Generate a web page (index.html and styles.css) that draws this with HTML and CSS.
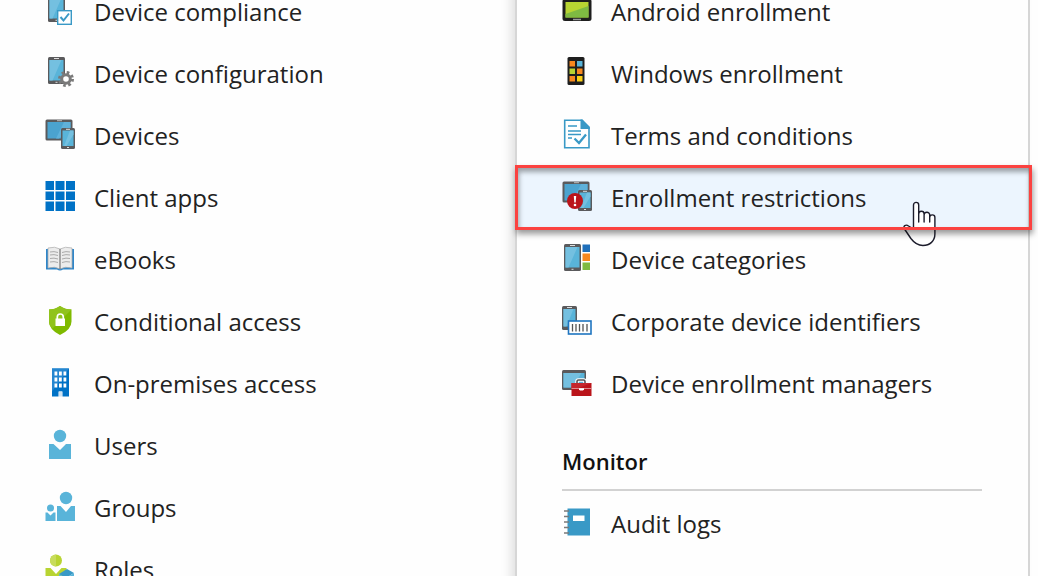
FILE: index.html
```
<!doctype html>
<html lang="en">
<head>
	<meta charset="UTF-8">
	<title>Device enrollment</title>
	<link rel="stylesheet" href="styles.css">
</head>
<body>
	<svg class="defs" aria-hidden="true">
		<defs>
			<g id="phone">
				<rect width="17" height="27" rx="1.5" fill="#5a5a5c"/>
				<rect x="1.5" y="3" width="14" height="20.5" fill="#59b4d9"/>
				<path d="M1.5 3h12l-9 20.500h-3z" fill="#74c0e0"/>
				<path d="M6 1.500h5M7.500 25.300h2" stroke="#ddd"/>
			</g>
			<g id="tablets">
				<rect x=".5" y="0.500" width="27" height="21" rx="1.500" fill="#5a5a5c"/>
				<rect x="2.500" y="3" width="23" height="16.500" fill="#4ba3cf"/>
				<path d="M19 3h6.500v8L14 19.500h-3z" fill="#5fb1da"/>
				<path d="M12 1.700h5" stroke="#bbb"/>
				<rect x="16" y="9" width="14" height="21" rx="1.500" fill="#5a5a5c"/>
				<rect x="17.500" y="11.500" width="11" height="15.500" fill="#59b4d9"/>
				<path d="M25 11.500h3.500v4l-7 11.500h-2.500z" fill="#74c0e0"/>
				<path d="M21 10.300h4M22 28.500h2" stroke="#ddd"/>
			</g>
		</defs>
	</svg>

	<div class="page">
		<nav class="menu" aria-label="Manage">
			<ul class="list">
				<li><a class="item" href="#">
					<svg class="icon" viewBox="0 0 30 30"><use href="#phone" x="3" y="0"/><rect x="12.700" y="15.700" width="13.600" height="13.600" fill="#fff" stroke="#3999c6" stroke-width="1.400"/><path d="M15.500 22l3 3.500 5.500-7" fill="none" stroke="#3999c6" stroke-width="2"/></svg>
					<span class="label">Device compliance</span></a></li>
				<li><a class="item" href="#">
					<svg class="icon" viewBox="0 0 30 30"><use href="#phone" x="3" y="0"/><circle cx="21" cy="22" r="6.500" fill="none" stroke="#7a7a7a" stroke-width="3" stroke-dasharray="2.550 2.550"/><circle cx="21" cy="22" r="4.300" fill="#fff" stroke="#7a7a7a" stroke-width="3"/></svg>
					<span class="label">Device configuration</span></a></li>
				<li><a class="item" href="#">
					<svg class="icon" viewBox="0 0 30 30"><use href="#tablets"/></svg>
					<span class="label">Devices</span></a></li>
				<li><a class="item" href="#">
					<svg class="icon" viewBox="0 0 30 30"><path fill="#0072c6" d="M.5 0h8.500v9H.5zM10.500 0h9v9h-9zM21 0h9v9h-9zM.5 10.500h8.500v8.500H.5zM10.500 10.500h9v8.500h-9zM21 10.500h9v8.500h-9zM.5 20.500h8.500v9.500H.5zM10.500 20.500h9v9.500h-9zM21 20.500h9v9.500h-9z"/></svg>
					<span class="label">Client apps</span></a></li>
				<li><a class="item" href="#">
					<svg class="icon" viewBox="0 0 30 30"><path d="M1 6h28v20.500H18q-3 2-6 0H1z" fill="#2f86c9"/><path d="M3 5q7-2 12 1 5-3 12-1v20q-7-2-12 1-5-3-12-1z" fill="#ececec" stroke="#aaa" stroke-width=".7"/><path d="M15 6v20" stroke="#777" stroke-width="1.200"/><path d="M5 9q4-1 8 .5M5 12q4-1 8 .5M5 15.500q4-1 8 .5M5 19q4-1 8 .5M17 9.500q4-1.500 8-.5M17 12.500q4-1.500 8-.5M17 16q4-1.500 8-.5M17 19.500q4-1.500 8-.5" fill="none" stroke="#aaa"/></svg>
					<span class="label">eBooks</span></a></li>
				<li><a class="item" href="#">
					<svg class="icon" viewBox="0 0 30 30"><path d="M15 1q5 3.500 11.500 3.500v12q0 8-11.500 13.500Q4 24.500 4 16.500v-12Q10 4.500 15 1z" fill="#7fba00"/><path d="M15 1q5 3.500 11.500 3.500L7.500 23.500Q4 20.500 4 16.500v-12Q10 4.500 15 1z" fill="#90c31c"/><rect x="10.500" y="13.500" width="9.500" height="7.500" fill="#fff"/><path d="M12.300 14v-2a3 3 0 0 1 6 0v2" fill="none" stroke="#fff" stroke-width="1.700"/></svg>
					<span class="label">Conditional access</span></a></li>
				<li><a class="item" href="#">
					<svg class="icon" viewBox="0 0 30 30"><path d="M7 1.500h17v28h-6.500v-5h-4v5H7z" fill="#0072c6"/><path d="M7 1.500h17L7 24.500z" fill="#2586d0"/><path fill="#fff" d="M9.500 4.500h2.800v4H9.500zM14 4.500h2.800v4H14zM18.500 4.500h2.800v4h-2.800zM9.500 10.500h2.800v4H9.500zM14 10.500h2.800v4H14zM18.500 10.500h2.800v4h-2.800zM9.500 16.500h2.800v4H9.500zM14 16.500h2.800v4H14zM18.500 16.500h2.800v4h-2.800z"/><path d="M14 24.500h3v5h-3z" fill="#cfe3f3"/></svg>
					<span class="label">On-premises access</span></a></li>
				<li><a class="item" href="#">
					<svg class="icon" viewBox="0 0 30 30"><g fill="#59b4d9"><circle cx="15" cy="7" r="6.200"/><path d="M4 15h4.500l6.500 6 6-6h5v15H4z"/></g></svg>
					<span class="label">Users</span></a></li>
				<li><a class="item" href="#">
					<svg class="icon" viewBox="0 0 30 30"><g fill="#59b4d9"><circle cx="21" cy="7" r="6.200"/><path d="M12 15h3.500l5.500 6 5-6h4v15H12z"/><circle cx="5.500" cy="17" r="3.500"/><path d="M.5 21.500h2l3 3 3-3h2V30H.5z"/></g></svg>
					<span class="label">Groups</span></a></li>
				<li><a class="item" href="#">
					<svg class="icon" viewBox="0 0 30 30"><circle cx="11" cy="7.500" r="6" fill="#b8d432"/><path d="M11 1.500a6 6 0 0 0 0 12z" fill="#c7dc5c"/><path d="M.5 15h5l5.500 6 5.500-6h5v15H.5z" fill="#b8d432"/><path d="M14 21l8-5 7 4-8 5z" fill="#3999c6"/><path d="M14 21l7 4 8-5v6l-8 4-7-4z" fill="#59b4d9"/></svg>
					<span class="label">Roles</span></a></li>
			</ul>
		</nav>

		<section class="panel">
			<ul class="list">
				<li><a class="item" href="#">
					<svg class="icon" viewBox="0 0 30 30"><rect x=".5" y="4" width="29" height="22" rx="2.500" fill="#1e1e1e"/><rect x="3.500" y="7" width="23" height="15.500" fill="#b8d432"/><path d="M26.500 11v11.500h-23V19z" fill="#7fba42"/><path d="M11 24.500h8" stroke="#999" stroke-width="1.500"/></svg>
					<span class="label">Android enrollment</span></a></li>
				<li><a class="item" href="#">
					<svg class="icon" viewBox="0 0 30 30"><rect x="5.500" y="0" width="17" height="28" rx="1.500" fill="#1e1e1e"/><path fill="#f7881f" d="M7.500 4h5.500v5.500H7.500zM15 11.500h5.500V17H15zM7.500 19h5.500v5.500H7.500z"/><path fill="#59b4d9" d="M15 4h5.500v5.500H15z"/><path fill="#b8d432" d="M7.500 11.500h5.500V17H7.500z"/><path fill="#fcd116" d="M15 19h5.500v5.500H15z"/></svg>
					<span class="label">Windows enrollment</span></a></li>
				<li><a class="item" href="#">
					<svg class="icon" viewBox="0 0 30 30"><path d="M2.700 1.200H20l7 7v20.600H2.700z" fill="#fff" stroke="#3999c6" stroke-width="1.600"/><path d="M18.500.5h2l7.300 8V10h-9.300z" fill="#3999c6"/><path d="M6 7h9M6 12h13M6 15.500h13M6 19h4" stroke="#3999c6" stroke-width="1.500"/><path d="M12.500 19.500l4.500 4.500 7-8.500" fill="none" stroke="#3999c6" stroke-width="2.300"/></svg>
					<span class="label">Terms and conditions</span></a></li>
				<li class="marked"><a class="item selected" href="#">
					<svg class="icon" viewBox="0 0 30 30"><use href="#tablets"/><circle cx="13" cy="20" r="8" fill="#ba141a"/><path d="M11.800 15h2.400l-.5 6.500h-1.400z" fill="#fff"/><circle cx="13" cy="24" r="1.300" fill="#fff"/></svg>
					<span class="label">Enrollment restrictions</span></a>
					<svg class="pointer" viewBox="0 0 34 46" aria-hidden="true"><path d="M10.500 28V4a2.600 2.600 0 0 1 5.200 0v17-8a2.700 2.700 0 0 1 5.400 0v8-7a2.700 2.700 0 0 1 5.600 0v7-4.500a2.500 2.500 0 0 1 5.200 0V33c0 7-5 11.500-12 11.500-5 0-9-3-12-7L1.500 28c-2-3 1.500-5 4-3z" fill="#fff" stroke="#1c1c2b" stroke-width="1.400" stroke-linejoin="round"/></svg>
				</li>
				<li><a class="item" href="#">
					<svg class="icon" viewBox="0 0 30 30"><use href="#phone" x="2" y="1"/><path d="M20.500 1.500H28V9h-7.500z" fill="#1f6fba"/><path d="M20.500 10.500H28V18h-7.500z" fill="#f7881f"/><path d="M20.500 19.500H28V27h-7.500z" fill="#7fba42"/></svg>
					<span class="label">Device categories</span></a></li>
				<li><a class="item" href="#">
					<svg class="icon" viewBox="0 0 30 30"><rect width="15" height="24" rx="1.500" y="1" fill="#5a5a5c"/><path d="M1.500 4h12v17.500h-12z" fill="#59b4d9"/><path d="M1.500 4h10l-7 17.500h-3z" fill="#74c0e0"/><path d="M5 2.500h5" stroke="#ddd"/><rect x="6.500" y="16" width="22.500" height="13" fill="#fff" stroke="#1f75c0" stroke-width="1.600"/><path d="M10.500 19v7.500M14 19v7.500M17.500 19v7.500M21 19v7.500M25 19v7.500" stroke="#555" stroke-width="1.300"/></svg>
					<span class="label">Corporate device identifiers</span></a></li>
				<li><a class="item" href="#">
					<svg class="icon" viewBox="0 0 30 30"><rect y="3" width="24" height="20" rx="1.500" fill="#5a5a5c"/><path d="M1.500 6h21v14.500h-21z" fill="#59b4d9"/><path d="M1.500 6h18l-9.500 14.500H1.500z" fill="#74c0e0"/><path d="M15 16v-1.500q0-1.500 1.500-1.500h5q1.500 0 1.500 1.500V16" fill="none" stroke="#fff" stroke-width="3.500"/><path d="M15 16v-1.500q0-1.500 1.500-1.500h5q1.500 0 1.500 1.500V16" fill="none" stroke="#555" stroke-width="1.600"/><path d="M9.500 16h20v13h-20z" fill="#ba141a"/><path d="M9.500 16h20L14 22H9.500z" fill="#c5272d"/><path d="M9.500 21.500h20" stroke="#e6a6a8" stroke-width=".8"/><path d="M17 21.200h5v1l-1 1.300h-3l-1-1.300z" fill="#fff"/></svg>
					<span class="label">Device enrollment managers</span></a></li>
			</ul>
			<h2 class="heading">Monitor</h2>
			<ul class="list">
				<li><a class="item" href="#">
					<svg class="icon" viewBox="0 0 30 30"><path d="M5.500 1.500H28v27H5.500z" fill="#3999c6"/><path d="M11 8.500h11.500V14H11z" fill="#fff"/><path d="M2 4h5M2 9.500h5M2 15h5M2 20.500h5M2 26h5" stroke="#7a7a7a" stroke-width="1.500"/></svg>
					<span class="label">Audit logs</span></a></li>
			</ul>
		</section>
	</div>
</body>
</html>
```
FILE: styles.css
```
* { box-sizing: border-box; }

body {
	margin: 0;
	background: #fefefe;
	color: #222;
	font-family: "Open Sans", "Noto Sans", sans-serif;
	font-size: 24px;
}

.defs { position: absolute; width: 0; height: 0; }

.page {
	display: grid;
	grid-template-columns: 1fr 1fr;
	height: 100vh;
	padding-right: 8px;
	overflow: hidden;
}

.list { margin: 0; padding: 0; list-style: none; }

/* both columns are scrolled part way through their first row */
.menu, .panel { margin-top: -21px; }

.item {
	display: flex;
	align-items: center;
	gap: 19px;
	height: 62px;
	padding-left: 45px;
	color: inherit;
	text-decoration: none;
	white-space: nowrap;
}

.icon { flex: none; width: 30px; height: 30px; }

.label { padding-top: 4px; line-height: 32px; }

.panel {
	border: solid #d6d6d6;
	border-width: 0 2px;
	box-shadow: -6px 0 10px -2px rgba(0, 0, 0, 0.12);
}

.marked { position: relative; }

.selected { background: #ecf5fe; }

.marked::after {
	content: "";
	position: absolute;
	inset: 0 -4px -3px -2px;
	border: 3px solid #fb4240;
	box-shadow: 1px 4px 6px rgba(0, 0, 0, 0.4), inset 1px 4px 5px rgba(0, 0, 0, 0.35);
	pointer-events: none;
}

.pointer {
	position: absolute;
	top: 36px;
	right: 91px;
	width: 34px;
	height: 46px;
}

.heading {
	margin: 0 46px 0 45px;
	padding: 31px 0 11px;
	border-bottom: 2px solid #d2d2d2;
	color: #111;
	font-size: 22px;
	font-weight: 600;
	line-height: 34px;
}
```
